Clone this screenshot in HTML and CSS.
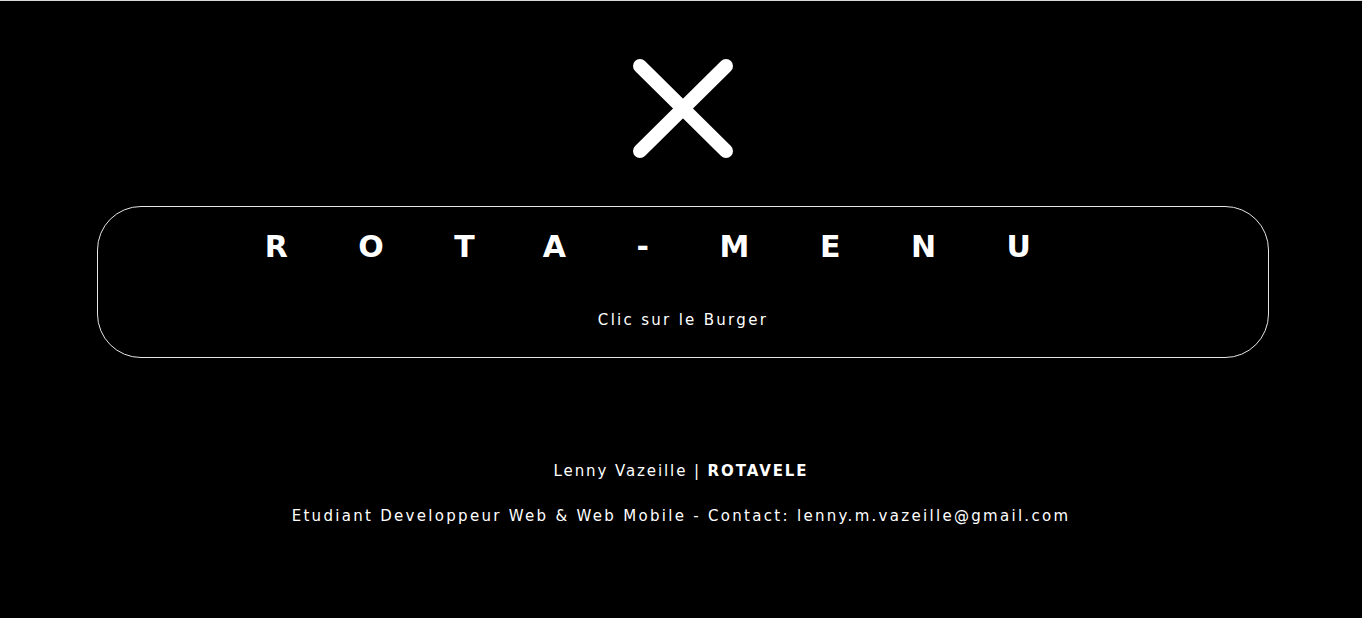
FILE: index.html
```html
<!DOCTYPE html>
<html lang="fr">
<head>
<meta charset="utf-8">
<title>Rota-Menu</title>
<link rel="stylesheet" href="styles.css">
</head>
<body>
<main class="page">
  <button class="burger" aria-label="Fermer">
    <svg width="110" height="110" viewBox="0 0 110 110">
      <line x1="12" y1="12" x2="98" y2="97" stroke="#fff" stroke-width="14" stroke-linecap="round"/>
      <line x1="98" y1="12" x2="12" y2="97" stroke="#fff" stroke-width="14" stroke-linecap="round"/>
    </svg>
  </button>
  <section class="card">
    <h1 class="title">ROTA-MENU</h1>
    <p class="hint">Clic sur le Burger</p>
  </section>
  <footer class="footer">
    <p class="author">Lenny Vazeille | <strong>ROTAVELE</strong></p>
    <p>Etudiant Developpeur Web &amp; Web Mobile - Contact: lenny.m.vazeille@gmail.com</p>
  </footer>
</main>
</body>
</html>
```
FILE: styles.css
```css
html, body {
  margin: 0;
  padding: 0;
  background: #000;
}
body {
  border-top: 1px solid #d9d9d9;
  height: 617px;
  overflow: hidden;
  color: #fff;
  font-family: "DejaVu Sans", sans-serif;
}
.page {
  display: flex;
  flex-direction: column;
  align-items: center;
}
.burger {
  margin-top: 53px;
  margin-left: 4px;
  padding: 0;
  border: 0;
  background: transparent;
  width: 110px;
  height: 110px;
  display: block;
}
.burger svg { display: block; }
.card {
  margin-top: 42px;
  margin-left: 4px;
  width: 1170px;
  height: 150px;
  border: 1px solid #e6e6e6;
  border-radius: 44px;
  text-align: center;
  box-sizing: content-box;
}
.title {
  margin: 23px 0 0 0;
  font-size: 30px;
  font-weight: bold;
  letter-spacing: 70.5px;
  line-height: 34px;
}
.hint {
  margin: 46px 0 0 0;
  font-size: 15px;
  letter-spacing: 2.3px;
  line-height: 20px;
}
.footer {
  margin-top: 103px;
  text-align: center;
  font-size: 15px;
  letter-spacing: 2.3px;
  line-height: 20px;
}
.footer p { margin: 0 0 25px 0; }
.footer .author { letter-spacing: 1.9px; }
.footer strong { font-weight: bold; }
```
